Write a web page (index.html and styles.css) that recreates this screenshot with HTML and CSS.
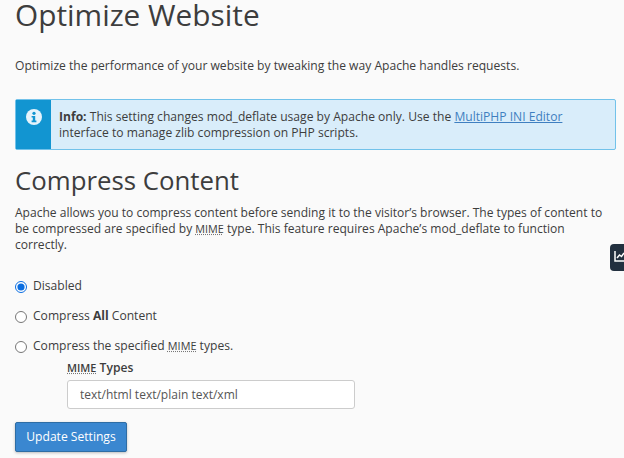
FILE: index.html
```html
<!DOCTYPE html>
<html lang="en">
<head>
<meta charset="utf-8">
<title>Optimize Website</title>
<link rel="stylesheet" href="styles.css">
</head>
<body>
<main class="page">
  <h1 class="title">Optimize Website</h1>
  <p class="intro">Optimize the performance of your website by tweaking the way Apache handles requests.</p>
  <div class="alert">
    <div class="alert-side">
      <svg class="alert-icon" viewBox="0 0 16 16" width="16" height="16" aria-hidden="true"><circle cx="8" cy="8" r="8" fill="#e6f3fb"/><circle cx="8" cy="4.300" r="1.600" fill="#1295d1"/><path d="M5.600 7h3.600v4.600h1.200v1.600H5.600v-1.600h1.200V8.600H5.600z" fill="#1295d1"/></svg>
    </div>
    <div class="alert-body"><strong>Info:</strong> This setting changes mod_deflate usage by Apache only. Use the <a href="#">MultiPHP INI Editor</a> interface to manage zlib compression on PHP scripts.</div>
  </div>
  <h2 class="section">Compress Content</h2>
  <p class="desc">Apache allows you to compress content before sending it to the visitor’s browser. The types of content to be compressed are specified by <abbr>MIME</abbr> type. This feature requires Apache’s mod_deflate to function correctly.</p>
  <form class="form">
    <label class="radio"><input type="radio" name="c" checked><span>Disabled</span></label>
    <label class="radio"><input type="radio" name="c"><span>Compress <strong>All</strong> Content</span></label>
    <label class="radio"><input type="radio" name="c"><span>Compress the specified <abbr>MIME</abbr> types.</span></label>
    <div class="types">
      <label class="types-label" for="t"><abbr>MIME</abbr> Types</label>
      <input class="types-input" id="t" type="text" value="text/html text/plain text/xml">
    </div>
    <button class="btn" type="button">Update Settings</button>
  </form>
</main>
<div class="side-tab"><svg viewBox="0 0 12 12" width="12" height="12" aria-hidden="true"><path d="M1 1v10h10" fill="none" stroke="#fff" stroke-width="1.500"/><path d="M3 8l2.500-3 2 1.500L10 3" fill="none" stroke="#fff" stroke-width="1.500"/></svg></div>
</body>
</html>
```
FILE: styles.css
```css
* { box-sizing: border-box; }
html, body { margin: 0; height: 100%; overflow: hidden; }
body {
  background: #fafafa;
  color: #3d3d3d;
  font-family: "Open Sans", sans-serif;
  font-size: 12.1px;
  line-height: 16px;
  position: relative;
}
.page { padding: 0 8px 0 15px; }
.title {
  margin: -7px 0 0;
  font-size: 29.800px;
  line-height: 44px;
  font-weight: 400;
  color: #3d3d3d;
}
.intro { margin: 21px 0 0; }
.alert {
  display: flex;
  margin-top: 25px;
  height: 51px;
  border: 1.500px solid #72c2ea;
  border-radius: 2px;
  background: #d9edfa;
}
.alert-side {
  width: 35px;
  flex: none;
  background: #1295d1;
  display: flex;
  justify-content: center;
  padding-top: 9px;
}
.alert-icon { display: block; }
.alert-body { padding: 9px 8px 0 8px; }
.alert-body a { color: #3f7fc0; text-decoration: underline; }
.section {
  margin: 12px 0 0;
  font-size: 25.800px;
  line-height: 36px;
  font-weight: 400;
}
.desc { margin: 7px 0 0; font-size: 12.050px; }
abbr { font-size: 90%; text-decoration: underline dotted #777; }
.form { margin-top: 25px; }
.radio { display: flex; align-items: center; gap: 6px; height: 16px; margin-bottom: 14px; }
.radio input { margin: 1px 0 0 0; width: 12px; height: 12px; accent-color: #0a6de0; }
.types { margin: -8px 0 0 52px; }
.types-label { display: block; font-weight: 600; }
.types-input {
  display: block;
  width: 288px;
  height: 29px;
  margin-top: 4px;
  padding: 0 12px;
  border: 1px solid #ccc;
  border-radius: 3px;
  background: #fff;
  color: #555;
  font: inherit;
  font-size: 12px;
}
.btn {
  display: block;
  margin-top: 13px;
  width: 112px;
  height: 30px;
  border: 1px solid #2e6da4;
  border-radius: 2px;
  background: #3a87d0;
  color: #fff;
  font: inherit;
  box-shadow: 0 1px 3px rgba(0,0,0,.25);
}
.side-tab {
  position: absolute;
  left: 610px;
  top: 244px;
  width: 20px;
  height: 27px;
  background: #22303f;
  border-radius: 4px;
  padding: 6px 0 0 4px;
}
.side-tab svg { display: block; }
```
